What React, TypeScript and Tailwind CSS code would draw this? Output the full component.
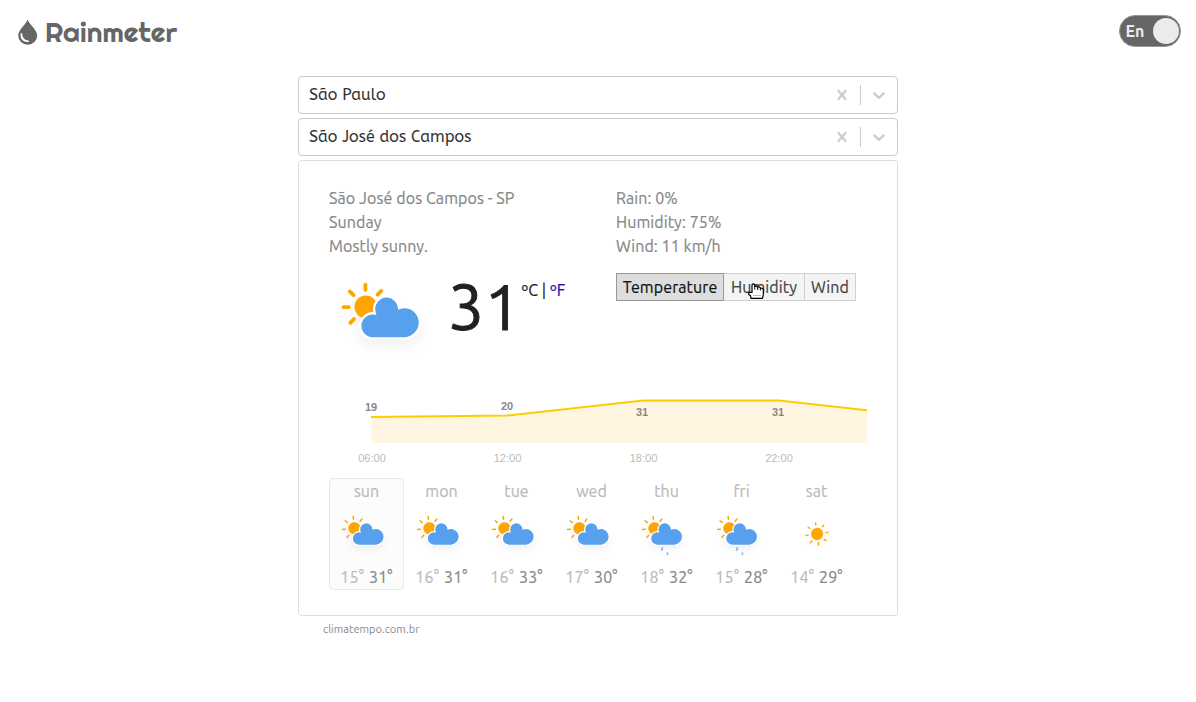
import React from 'react';

type IconKind = 'cloudy' | 'rainy' | 'sunny';

const rayAngles = [0, 45, 90, 135, 180, 225, 270, 315];

const cloudPath =
  'M47.7,35.4c0-4.6-3.7-8.2-8.2-8.2c-1,0-1.9,0.2-2.8,0.5c-0.3-3.4-3.1-6.2-6.6-6.2c-3.7,0-6.7,3-6.7,6.7c0,0.8,0.2,1.6,0.4,2.3c-0.3-0.1-0.7-0.1-1-0.1c-3.7,0-6.7,3-6.7,6.7c0,3.6,2.9,6.6,6.5,6.7l17.2,0C44.2,43.3,47.7,39.8,47.7,35.4z';

function Sun({ x, y, tilt, width = 2, from = 9, to = 11.8 }: { x: number; y: number; tilt: number; width?: number; from?: number; to?: number }) {
  return (
    <g transform={`translate(${x},${y}) rotate(${tilt})`}>
      {rayAngles.map((a) => (
        <line key={a} y1={-from} y2={-to} stroke="orange" strokeWidth={width} strokeLinecap="round" transform={`rotate(${a})`} />
      ))}
      <circle r="6" fill="orange" />
    </g>
  );
}

/* Drawn in a 60x60 unit box. */
function WeatherIcon({ kind, className, sunX = 18.2, tilt = -6, rayWidth = 1.5 }: { kind: IconKind; className: string; sunX?: number; tilt?: number; rayWidth?: number }) {
  return (
    <svg viewBox="0 0 60 60" className={className}>
      <g className="drop-shadow-[0_4px_3px_rgba(0,0,0,0.05)]">
        {kind === 'sunny' ? (
          <Sun x={30.8} y={32.6} tilt={-8} width={1.4} from={8.9} to={11} />
        ) : (
          <>
            <Sun x={sunX} y={27} tilt={tilt} width={rayWidth} />
            <path d={cloudPath} fill="#57A0EE" stroke="#fff" strokeWidth="1.2" transform={kind === 'rainy' ? 'translate(-1.6,0)' : undefined} />
          </>
        )}
      </g>
      {kind === 'rainy' && (
        <g stroke="#91C0F8" strokeWidth="1.9">
          <path d="M26.1 45.6l-.6 3.8" />
          <path d="M30.9 51l.5 2.6" />
        </g>
      )}
    </svg>
  );
}

function Select({ value }: { value: string }) {
  return (
    <div className="flex h-[38px] items-center rounded border border-[#ccc] bg-white pl-2.5 text-[#333]">
      <span className="flex-1 font-['ABeeZee','Ubuntu','Noto_Sans',sans-serif] text-base leading-6 font-normal">{value}</span>
      <svg viewBox="0 0 20 20" className="mr-2 size-5 fill-[#ccc]">
        <path d="M14.348 14.849c-0.469 0.469-1.229 0.469-1.697 0l-2.651-3.030-2.651 3.029c-0.469 0.469-1.229 0.469-1.697 0-0.469-0.469-0.469-1.229 0-1.697l2.758-3.15-2.759-3.152c-0.469-0.469-0.469-1.228 0-1.697s1.228-0.469 1.697 0l2.652 3.031 2.651-3.031c0.469-0.469 1.228-0.469 1.697 0s0.469 1.229 0 1.697l-2.758 3.152 2.758 3.15c0.469 0.469 0.469 1.229 0 1.698z" />
      </svg>
      <span className="h-5 w-px bg-[#ccc]" />
      <svg viewBox="0 0 20 20" className="mx-2 size-5 fill-[#ccc]">
        <path d="M4.516 7.548c0.436-0.446 1.043-0.481 1.576 0l3.908 3.747 3.908-3.747c0.533-0.481 1.141-0.446 1.574 0 0.436 0.445 0.408 1.197 0 1.615-0.406 0.418-4.695 4.502-4.695 4.502-0.217 0.223-0.502 0.335-0.787 0.335s-0.57-0.112-0.789-0.335c0 0-4.287-4.084-4.695-4.502s-0.436-1.17 0-1.615z" />
      </svg>
    </div>
  );
}

const days: { name: string; min: number; max: number; kind: IconKind }[] = [
  { name: 'sun', min: 15, max: 31, kind: 'cloudy' },
  { name: 'mon', min: 16, max: 31, kind: 'cloudy' },
  { name: 'tue', min: 16, max: 33, kind: 'cloudy' },
  { name: 'wed', min: 17, max: 30, kind: 'cloudy' },
  { name: 'thu', min: 18, max: 32, kind: 'rainy' },
  { name: 'fri', min: 15, max: 28, kind: 'rainy' },
  { name: 'sat', min: 14, max: 29, kind: 'sunny' },
];

function Chart() {
  return (
    <svg viewBox="0 0 538 90" className="block h-[90px] w-[538px] font-['Liberation_Sans',Arial,sans-serif] text-[11px]">
      <path d="M42.5 32L178.5 30.5L314 16L450 16L538 25.5V58H42.5Z" fill="#fff6e2" />
      <path d="M42 32L178 30.5L314 15.5L450 15.5L538 25.3" fill="none" stroke="#fc0" strokeWidth="2" />
      <g fontWeight="700" fill="#878787" textAnchor="middle">
        <text x="42" y="26">19</text>
        <text x="178" y="25">20</text>
        <text x="313" y="31">31</text>
        <text x="449" y="31">31</text>
      </g>
      <g fill="#bababa" textAnchor="middle">
        <text x="43" y="77">06:00</text>
        <text x="178.5" y="77">12:00</text>
        <text x="314.5" y="77">18:00</text>
        <text x="450" y="77">22:00</text>
      </g>
    </svg>
  );
}

export default function App() {
  return (
    <div className="min-h-[702px] bg-white font-['Ubuntu','Noto_Sans',sans-serif] text-base leading-6">
      <header className="flex h-[76px] items-start justify-between pr-[15px] pl-[18px]">
        <div className="flex items-center pt-[14px] text-[#666]">
          <svg viewBox="0 0 20 26" className="h-[26px] w-5">
            <path d="M9.6 0.6C10.8 5 19.2 11 19.2 16.5A9.5 9.2 0 0 1 0.2 16.5C0.2 11 8.4 5 9.6 0.6Z" fill="#666" />
            <path d="M2.7 14.6C1.5 19.5 5.5 24 10.6 22.9C11.2 22.7 11.2 21.5 10.3 21.5C6.8 21.4 4.4 18.6 4.2 14.8C4.1 13.7 2.9 13.7 2.7 14.6Z" fill="#fff" />
          </svg>
          <h1 className="ml-[7px] font-['Righteous','Lato',sans-serif] text-[28px] leading-9 font-normal">Rainmeter</h1>
        </div>
        <div className="mt-[15px] flex h-8 w-[62px] items-center justify-between rounded-full border border-[#999] bg-[#666] pr-px pl-[5.5px]">
          <span className="text-base font-bold text-[#ebebeb]">En</span>
          <span className="size-[26px] rounded-full bg-[#ebebeb]" />
        </div>
      </header>

      <main className="mx-auto flex w-[600px] flex-col gap-1">
        <Select value="São Paulo" />
        <Select value="São José dos Campos" />

        <section className="h-[456px] rounded border border-[#ddd] pt-[25px] pl-[30px] [-webkit-text-stroke:0.2px]">
          <div className="flex h-[196px]">
            <div className="w-[287px]">
              <div className="tracking-[0.1px] text-[#878787]">
                <p>São José dos Campos - SP</p>
                <p>Sunday</p>
                <p>Mostly sunny.</p>
              </div>
              <div className="flex">
                <WeatherIcon kind="cloudy" className="-mt-0.5 ml-px size-[113px]" sunX={19} tilt={-1} rayWidth={2} />
                <div className="ml-[5px] flex pt-2 text-[#212121]">
                  <span className="text-[64px] leading-[80px] tracking-[0.5px] [-webkit-text-stroke:0.9px]">31</span>
                  <span className="pt-3">
                    ºC | <a className="text-[#1a0dab]">ºF</a>
                  </span>
                </div>
              </div>
            </div>
            <div>
              <div className="tracking-[0.08px] text-[#878787]">
                <p>Rain: 0%</p>
                <p>Humidity: 75%</p>
                <p>Wind: 11 km/h</p>
              </div>
              <div className="mt-[15px] flex tracking-[0.1px]">
                <button className="relative h-7 w-[108px] border border-[#999] bg-[#ddd] text-[#111]">Temperature</button>
                <button className="relative h-7 w-[81px] border border-l-0 border-[#d0d0d0] bg-[#f4f4f4] text-[#444]">
                  Humidity
                  <svg viewBox="0 0 18 18" className="absolute top-[8px] left-[23px] size-[18px]">
                    <path
                      d="M5 8.8V3.2Q5 1.8 6.3 1.8Q7.5 1.8 7.8 3.2V4.4Q10 3.6 10.6 5Q12.8 4.4 13.4 6Q16.2 5.8 16.3 8.3V13L15.4 16.3H4L3.6 13.8L1.7 12.4V10.4H5Z"
                      fill="#fff"
                      stroke="#000"
                      strokeWidth="1.2"
                      strokeLinejoin="round"
                    />
                    <path d="M7.8 4.5v3M10.7 5v3M13.4 6v2.5" stroke="#000" fill="none" />
                    <path d="M6.5 13.5h7" stroke="#777" strokeDasharray="1 1" />
                  </svg>
                </button>
                <button className="h-7 w-[51px] border border-l-0 border-[#d0d0d0] bg-[#f4f4f4] text-[#444]">Wind</button>
              </div>
            </div>
          </div>

          <div className="-mt-0.5 h-[98px] [-webkit-text-stroke:0px]">
            <div className="pt-[5px]">
              <Chart />
            </div>
          </div>

          <div className="flex">
            {days.map((d, i) => (
              <div
                key={d.name}
                className={`flex h-28 w-[75px] flex-col items-center rounded-sm border ${i === 0 ? 'border-[#e9e9e9] bg-[#fcfcfc]' : 'border-transparent'}`}
              >
                <div className="text-[#bababa]">{d.name}</div>
                <WeatherIcon kind={d.kind} className="-mt-[2px] size-[60.6px] shrink-0" />
                <div className="mt-[3px] flex gap-[5px] tracking-[0.15px]">
                  <span className="text-[#bababa]">{d.min}°</span>
                  <span className="text-[#878787]">{d.max}°</span>
                </div>
              </div>
            ))}
          </div>
        </section>
        <footer className="pl-[25px] text-[11px] leading-[18px] tracking-[0.05px] text-[#878787]">climatempo.com.br</footer>
      </main>
    </div>
  );
}
